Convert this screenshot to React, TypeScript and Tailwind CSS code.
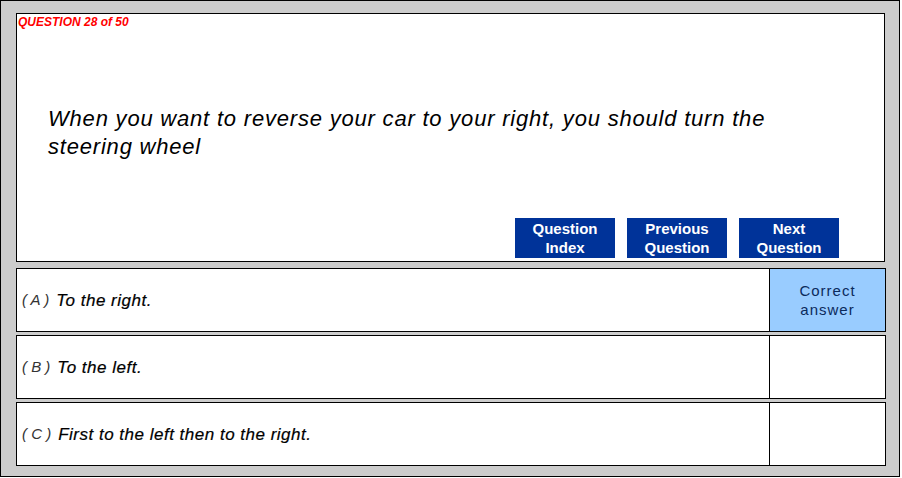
import React from "react";

const font = { fontFamily: '"Liberation Sans", Arial, sans-serif' };

function Btn({ a, b }: { a: string; b: string }) {
  return (
    <div className="w-[100px] h-[40px] bg-[#003399] text-white font-bold text-[15px] leading-[19px] flex flex-col items-center justify-center">
      <span>{a}</span>
      <span>{b}</span>
    </div>
  );
}

function Row({ letter, text, correct }: { letter: string; text: string; correct?: boolean }) {
  return (
    <div className="h-[64px] w-[870px] border border-black bg-white flex">
      <div className="flex-1 flex items-center pl-[5px] pt-[1px] italic">
        <span className="text-[15px] text-[#333]">( {letter} )</span>
        <span className="text-[17px] tracking-[0.5px] text-black ml-[7px] [-webkit-text-stroke:0.2px_black]">{text}</span>
      </div>
      <div
        className={
          "w-[116px] border-l border-black flex flex-col items-center justify-center text-[15px] leading-[19px] tracking-[1px] text-[#0b2a5c] " +
          (correct ? "bg-[#99ccff]" : "bg-white")
        }
      >
        {correct ? (
          <>
            <span>Correct</span>
            <span>answer</span>
          </>
        ) : null}
      </div>
    </div>
  );
}

export default function App() {
  return (
    <div style={font} className="w-[902px] h-[478px] bg-white">
      <div className="w-[900px] h-[477px] border border-black bg-[#cccccc] pl-[15px] pt-[12px]">
        <div className="w-[869px] h-[249px] border border-black bg-white flex flex-col">
          <div className="pl-[1px] pt-[1px] text-[12px] leading-[14px] font-bold italic text-[#ff0000]">
            QUESTION 28 of 50
          </div>
          <div className="mt-[76px] pl-[31px] pr-[60px] text-[22px] leading-[28px] tracking-[0.8px] italic text-black">
            When you want to reverse your car to your right, you should turn the
            <br />
            steering wheel
          </div>
          <div className="mt-auto flex justify-end gap-[12px] pr-[45px] pb-[3px]">
            <Btn a="Question" b="Index" />
            <Btn a="Previous" b="Question" />
            <Btn a="Next" b="Question" />
          </div>
        </div>
        <div className="mt-[6px] flex flex-col gap-[3px]">
          <Row letter="A" text="To the right." correct />
          <Row letter="B" text="To the left." />
          <Row letter="C" text="First to the left then to the right." />
        </div>
      </div>
    </div>
  );
}
